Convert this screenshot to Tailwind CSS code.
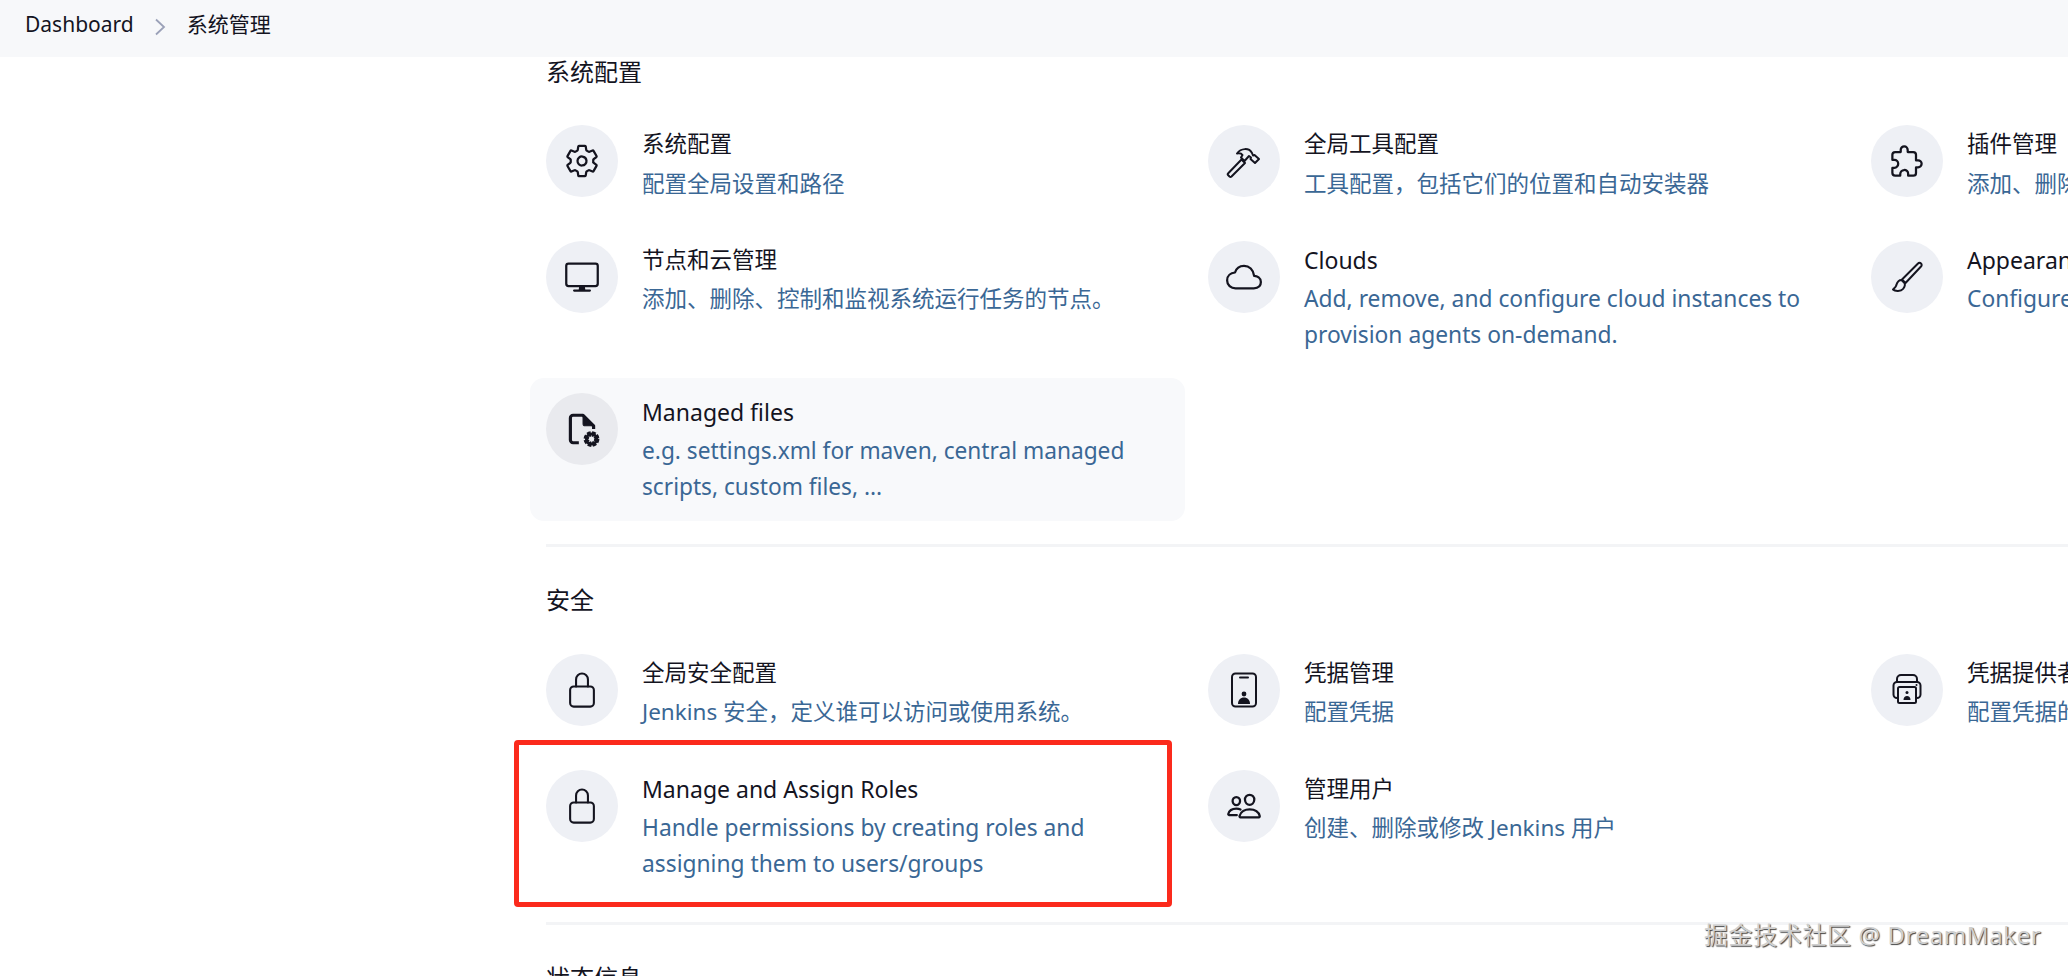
<!DOCTYPE html>
<html lang="zh-CN">
<head>
  <meta charset="UTF-8" />
  <title>系统管理 - Jenkins</title>
  <script src="https://cdn.jsdelivr.net/npm/@tailwindcss/browser@4"></script>
</head>
<body class="bg-white text-[#14141f] font-['Noto_Sans','Noto_Sans_CJK_SC',sans-serif]">
<div class="relative w-[2068px] h-[976px] overflow-hidden">

  <!-- breadcrumb bar -->
  <header class="h-[57px] bg-[#f7f8fa] flex items-center pl-[25px] text-[21px] pb-[8px]">
    <a>Dashboard</a>
    <svg class="w-[12px] h-[18px] ml-[20px] mr-[21px] mt-[4px] text-[#9ba1b8]" viewBox="0 0 12 18" fill="none" stroke="currentColor" stroke-width="1.8"><path d="M2 1.5l8 7.5-8 7.5"/></svg>
    <a>系统管理</a>
  </header>

  <main class="pl-[530px]">

    <!-- 系统配置 -->
    <h2 class="ml-[16px] -mt-[1px] text-[24px] leading-[32px] mb-[22px]">系统配置</h2>
    <div class="grid grid-cols-[662px_663px_655px] gap-y-[9px] items-start w-[1980px]">

      <a class="w-[655px] flex gap-[24px] pt-[15px] pb-[15px] px-[16px] rounded-[14px]">
        <span class="shrink-0 w-[72px] h-[72px] rounded-full bg-[#eef0f5] flex items-center justify-center">
          <svg class="w-[36px] h-[36px]" viewBox="0 0 512 512" fill="none" stroke="currentColor" stroke-width="32" stroke-linecap="round" stroke-linejoin="round"><path d="M262.29 192.31a64 64 0 1057.4 57.4 64.13 64.13 0 00-57.4-57.4zM416.39 256a154.34 154.34 0 01-1.53 20.79l45.21 35.46a10.81 10.81 0 012.45 13.75l-42.77 74a10.81 10.81 0 01-13.14 4.59l-44.9-18.08a16.11 16.11 0 00-15.17 1.75A164.48 164.48 0 01325 400.8a15.94 15.94 0 00-8.82 12.14l-6.73 47.89a11.08 11.08 0 01-10.68 9.17h-85.54a11.11 11.11 0 01-10.69-8.87l-6.72-47.82a16.07 16.07 0 00-9-12.22 155.3 155.3 0 01-21.46-12.57 16 16 0 00-15.11-1.71l-44.89 18.07a10.81 10.81 0 01-13.14-4.58l-42.77-74a10.8 10.8 0 012.45-13.75l38.21-30a16.05 16.05 0 006-14.08c-.36-4.17-.58-8.33-.58-12.5s.21-8.27.58-12.35a16 16 0 00-6.07-13.94l-38.19-30A10.81 10.81 0 0149.48 186l42.77-74a10.81 10.81 0 0113.14-4.59l44.9 18.08a16.11 16.11 0 0015.17-1.75A164.48 164.48 0 01187 111.2a15.94 15.94 0 008.82-12.14l6.73-47.89A11.08 11.08 0 01213.23 42h85.54a11.11 11.11 0 0110.69 8.87l6.72 47.82a16.07 16.07 0 009 12.22 155.3 155.3 0 0121.46 12.57 16 16 0 0015.11 1.71l44.89-18.07a10.81 10.81 0 0113.14 4.58l42.77 74a10.8 10.8 0 01-2.45 13.75l-38.21 30a16.05 16.05 0 00-6.05 14.08c.33 4.14.55 8.3.55 12.47z"/></svg>
        </span>
        <span class="pt-px pr-[16px]">
          <span class="block text-[22.5px] leading-[36px]">系统配置</span>
          <span class="block mt-[4px] text-[22.5px] leading-[36px] text-[#3a6795]">配置全局设置和路径</span>
        </span>
      </a>

      <a class="w-[655px] flex gap-[24px] pt-[15px] pb-[15px] px-[16px] rounded-[14px]">
        <span class="shrink-0 w-[72px] h-[72px] rounded-full bg-[#eef0f5] flex items-center justify-center">
          <svg class="w-[36px] h-[36px]" viewBox="0 0 36 36" fill="none" stroke="currentColor" stroke-width="2" stroke-linejoin="round"><path d="M2 30.500L15.500 16.500l3.500 3.500L5.500 33.500a1.500 1.500 0 01-2 0l-1.500-1.500a1 1 0 010-1.500z"/><path d="M11 10.500C15 5 23 4.500 26 10l1 2.500 1.500-.5 4.500 4-4 4-4.500-4 .5-1.500-2-1.500-4.500 5-3.500-3.500 1.500-2.500C15.500 10.500 13.500 10 11 10.500z"/></svg>
        </span>
        <span class="pt-px pr-[16px]">
          <span class="block text-[22.5px] leading-[36px]">全局工具配置</span>
          <span class="block mt-[4px] text-[22.5px] leading-[36px] text-[#3a6795]">工具配置，包括它们的位置和自动安装器</span>
        </span>
      </a>

      <a class="w-[655px] flex gap-[24px] pt-[15px] pb-[15px] px-[16px] rounded-[14px]">
        <span class="shrink-0 w-[72px] h-[72px] rounded-full bg-[#eef0f5] flex items-center justify-center">
          <svg class="w-[36px] h-[36px]" viewBox="0 0 512 512" fill="none" stroke="currentColor" stroke-width="32" stroke-linecap="round" stroke-linejoin="round"><path d="M413.66 246.1H386a2 2 0 01-2-2v-77.24A38.86 38.86 0 00345.14 128H267.9a2 2 0 01-2-2V98.34c0-27.14-21.5-49.86-48.64-50.33a49.53 49.53 0 00-50.4 49.51V126a2 2 0 01-2 2H87.62A39.74 39.74 0 0048 167.62V238a2 2 0 002 2h26.91c29.37 0 53.68 25.48 54.09 54.85.42 29.87-23.51 57.15-53.29 57.15H50a2 2 0 00-2 2v70.38A39.74 39.74 0 0087.62 464H158a2 2 0 002-2v-20.93c0-30.28 24.75-56.35 55-57.06 30.1-.7 57 20.31 57 50.28V462a2 2 0 002 2h71.14A38.86 38.86 0 00384 425.14v-78a2 2 0 012-2h28.48c27.63 0 49.52-22.67 49.52-50.4s-23.2-48.64-50.34-48.64z"/></svg>
        </span>
        <span class="pt-px pr-[16px]">
          <span class="block text-[22.5px] leading-[36px]">插件管理</span>
          <span class="block mt-[4px] text-[22.5px] leading-[36px] text-[#3a6795]">添加、删除、禁用或启用Jenkins功能扩展插件。</span>
        </span>
      </a>

      <a class="w-[655px] flex gap-[24px] pt-[15px] pb-[16px] px-[16px] rounded-[14px]">
        <span class="shrink-0 w-[72px] h-[72px] rounded-full bg-[#eef0f5] flex items-center justify-center">
          <svg class="w-[36px] h-[36px]" viewBox="0 0 512 512" fill="none" stroke="currentColor" stroke-width="32" stroke-linecap="round" stroke-linejoin="round"><rect x="32" y="64" width="448" height="320" rx="32" ry="32"/><path fill="currentColor" stroke-width="0" d="M304 448l-8-64h-80l-8 64h96z"/><path d="M368 448H144"/></svg>
        </span>
        <span class="pt-px pr-[16px]">
          <span class="block text-[22.5px] leading-[36px]">节点和云管理</span>
          <span class="block mt-[3px] text-[22.5px] leading-[36px] text-[#3a6795]">添加、删除、控制和监视系统运行任务的节点。</span>
        </span>
      </a>

      <a class="w-[655px] flex gap-[24px] pt-[15px] pb-[16px] px-[16px] rounded-[14px]">
        <span class="shrink-0 w-[72px] h-[72px] rounded-full bg-[#eef0f5] flex items-center justify-center">
          <svg class="w-[36px] h-[36px]" viewBox="0 0 512 512" fill="none" stroke="currentColor" stroke-width="32" stroke-linejoin="round"><path d="M400 240c-8.89-89.54-71-144-144-144-69 0-113.44 48.2-128 96-60 6-112 43.59-112 112 0 66 54 112 120 112h260c55 0 100-27.44 100-88 0-59.8-53-85.76-96-88z"/></svg>
        </span>
        <span class="pt-px pr-[16px]">
          <span class="block text-[23px] leading-[36px]">Clouds</span>
          <span class="block mt-[3px] text-[22.8px] leading-[36px] text-[#3a6795]">Add, remove, and configure cloud instances to provision agents on-demand.</span>
        </span>
      </a>

      <a class="w-[655px] flex gap-[24px] pt-[15px] pb-[16px] px-[16px] rounded-[14px]">
        <span class="shrink-0 w-[72px] h-[72px] rounded-full bg-[#eef0f5] flex items-center justify-center">
          <svg class="w-[36px] h-[36px]" viewBox="0 0 36 36" fill="none" stroke="currentColor" stroke-width="2" stroke-linejoin="round"><path d="M13 20.500L29 4.500a2 2 0 013 0 2 2 0 010 3L16.500 24z"/><path d="M12.500 21c-4 0-4.500 3-5.500 6-.5 1.500-2.500 2.500-3 3.500 2 2 8 2 10-.5 2-2.500 2-5 1.500-6z"/></svg>
        </span>
        <span class="pt-px pr-[16px]">
          <span class="block text-[23px] leading-[36px]">Appearance</span>
          <span class="block mt-[3px] text-[22.8px] leading-[36px] text-[#3a6795]">Configure the look and feel of Jenkins</span>
        </span>
      </a>

      <a class="w-[655px] flex gap-[24px] pt-[15px] pb-[16px] px-[16px] rounded-[14px] bg-[#f8f9fb]">
        <span class="shrink-0 w-[72px] h-[72px] rounded-full bg-[#e9eaee] flex items-center justify-center">
          <svg class="w-[38px] h-[38px]" viewBox="0 0 36 36" fill="none" stroke="currentColor" stroke-width="3" stroke-linejoin="round"><path d="M15 31H9.500A2.500 2.500 0 017 28.500v-21A2.500 2.500 0 019.500 5H19l10 10v3"/><path d="M19 5l10 10h-8a2 2 0 01-2-2z" fill="currentColor" stroke-width="1"/><circle cx="27" cy="27.500" r="5" stroke-width="5" stroke-dasharray="2.800 1.100"/><circle cx="27" cy="27.500" r="4.800" stroke-width="2.800"/></svg>
        </span>
        <span class="pt-px pr-[16px]">
          <span class="block text-[23px] leading-[36px]">Managed files</span>
          <span class="block mt-[3px] text-[22.7px] leading-[36px] text-[#3a6795]">e.g. settings.xml for maven, central managed scripts, custom files, ...</span>
        </span>
      </a>
    </div>

    <div class="ml-[16px] mt-[23px] h-[3px] bg-[#f3f4f6]"></div>

    <!-- 安全 -->
    <h2 class="ml-[16px] mt-[37px] text-[24px] leading-[32px] mb-[23px]">安全</h2>
    <div class="grid grid-cols-[662px_663px_655px] gap-y-[9px] items-start w-[1980px]">

      <a class="w-[655px] flex gap-[24px] pt-[15px] pb-[16px] px-[16px] rounded-[14px]">
        <span class="shrink-0 w-[72px] h-[72px] rounded-full bg-[#eef0f5] flex items-center justify-center">
          <svg class="w-[38px] h-[38px]" viewBox="0 0 512 512" fill="none" stroke="currentColor" stroke-width="28" stroke-linecap="round" stroke-linejoin="round"><path d="M336 208v-95a80 80 0 00-160 0v95"/><rect x="96" y="208" width="320" height="272" rx="48" ry="48"/></svg>
        </span>
        <span class="pt-px pr-[16px]">
          <span class="block text-[22.5px] leading-[36px]">全局安全配置</span>
          <span class="block mt-[3px] text-[22.5px] leading-[36px] text-[#3a6795]">Jenkins 安全，定义谁可以访问或使用系统。</span>
        </span>
      </a>

      <a class="w-[655px] flex gap-[24px] pt-[15px] pb-[16px] px-[16px] rounded-[14px]">
        <span class="shrink-0 w-[72px] h-[72px] rounded-full bg-[#eef0f5] flex items-center justify-center">
          <svg class="w-[36px] h-[36px]" viewBox="0 0 36 36" fill="none" stroke="currentColor" stroke-width="2" stroke-linecap="round" stroke-linejoin="round"><rect x="6" y="1.500" width="24" height="33" rx="3.500"/><path d="M14 5.500h8"/><circle cx="18" cy="22" r="2.400" fill="currentColor" stroke="none"/><path d="M12 32c0-4 2.500-6.500 6-6.500s6 2.500 6 6.500z" fill="currentColor" stroke="none"/></svg>
        </span>
        <span class="pt-px pr-[16px]">
          <span class="block text-[22.5px] leading-[36px]">凭据管理</span>
          <span class="block mt-[3px] text-[22.5px] leading-[36px] text-[#3a6795]">配置凭据</span>
        </span>
      </a>

      <a class="w-[655px] flex gap-[24px] pt-[15px] pb-[16px] px-[16px] rounded-[14px]">
        <span class="shrink-0 w-[72px] h-[72px] rounded-full bg-[#eef0f5] flex items-center justify-center">
          <svg class="w-[36px] h-[36px]" viewBox="0 0 36 36" fill="none" stroke="currentColor" stroke-width="2" stroke-linecap="round" stroke-linejoin="round"><path d="M8 10V7a4 4 0 014-4h12a4 4 0 014 4v3"/><path d="M9 26H8a3.500 3.500 0 01-3.500-3.500V13.500A3.500 3.500 0 018 10h20a3.500 3.500 0 013.500 3.500v9A3.500 3.500 0 0128 26h-1"/><rect x="9" y="15" width="18" height="16" rx="1.500"/><circle cx="18" cy="20.500" r="1.500" fill="currentColor" stroke="none"/><path d="M14.500 28c0-2.500 1.500-4 3.500-4s3.500 1.500 3.500 4z" fill="currentColor" stroke="none"/><circle cx="27.500" cy="13" r="1" fill="currentColor" stroke="none"/></svg>
        </span>
        <span class="pt-px pr-[16px]">
          <span class="block text-[22.5px] leading-[36px]">凭据提供者</span>
          <span class="block mt-[3px] text-[22.5px] leading-[36px] text-[#3a6795]">配置凭据的提供者和类型</span>
        </span>
      </a>

      <a class="w-[655px] flex gap-[24px] pt-[15px] pb-[16px] px-[16px] rounded-[14px]">
        <span class="shrink-0 w-[72px] h-[72px] rounded-full bg-[#eef0f5] flex items-center justify-center">
          <svg class="w-[38px] h-[38px]" viewBox="0 0 512 512" fill="none" stroke="currentColor" stroke-width="28" stroke-linecap="round" stroke-linejoin="round"><path d="M336 208v-95a80 80 0 00-160 0v95"/><rect x="96" y="208" width="320" height="272" rx="48" ry="48"/></svg>
        </span>
        <span class="pt-px pr-[16px]">
          <span class="block text-[23px] leading-[36px]">Manage and Assign Roles</span>
          <span class="block mt-[3px] text-[22.8px] leading-[36px] text-[#3a6795]">Handle permissions by creating roles and assigning them to users/groups</span>
        </span>
      </a>

      <a class="w-[655px] flex gap-[24px] pt-[15px] pb-[16px] px-[16px] rounded-[14px]">
        <span class="shrink-0 w-[72px] h-[72px] rounded-full bg-[#eef0f5] flex items-center justify-center">
          <svg class="w-[36px] h-[36px]" viewBox="0 0 512 512" fill="none" stroke="currentColor" stroke-width="32" stroke-linecap="round" stroke-linejoin="round"><path d="M402 168c-2.93 40.67-33.1 72-66 72s-63.12-31.32-66-72c-3-42.31 26.37-72 66-72s69 30.46 66 72z"/><path d="M336 304c-65.17 0-127.84 32.37-143.54 95.41-2.08 8.34 3.15 16.59 11.72 16.59h263.65c8.57 0 13.77-8.25 11.72-16.59C463.85 335.36 401.18 304 336 304z"/><path d="M200 185.94c-2.34 32.48-26.72 58.06-53 58.06s-50.7-25.57-53-58.06C91.61 152.15 115.34 128 147 128s55.39 24.77 53 57.94z"/><path d="M206 306c-18.05-8.27-37.93-11.45-59-11.45-52 0-102.1 25.85-114.65 76.2-1.65 6.66 2.53 13.25 9.37 13.25H154"/></svg>
        </span>
        <span class="pt-px pr-[16px]">
          <span class="block text-[22.5px] leading-[36px]">管理用户</span>
          <span class="block mt-[3px] text-[22.5px] leading-[36px] text-[#3a6795]">创建、删除或修改 Jenkins 用户</span>
        </span>
      </a>
    </div>

    <div class="ml-[16px] mt-[24px] h-[3px] bg-[#f3f4f6]"></div>

    <!-- 状态信息, cut off by the bottom of the window -->
    <h2 class="ml-[16px] mt-[37px] text-[24px] leading-[32px]">状态信息</h2>
  </main>

  <!-- red annotation box -->
  <div class="absolute left-[514px] top-[740px] w-[658px] h-[167px] border-[5px] border-[#fb2a1c] rounded-[4px]"></div>

  <!-- watermark -->
  <div class="absolute left-[1704px] top-[917px] text-[24px] leading-[36px] tracking-[0.6px] whitespace-nowrap text-[#cfcfcf] [text-shadow:1px_1px_1px_#444]">掘金技术社区 @ DreamMaker</div>
</div>
</body>
</html>
